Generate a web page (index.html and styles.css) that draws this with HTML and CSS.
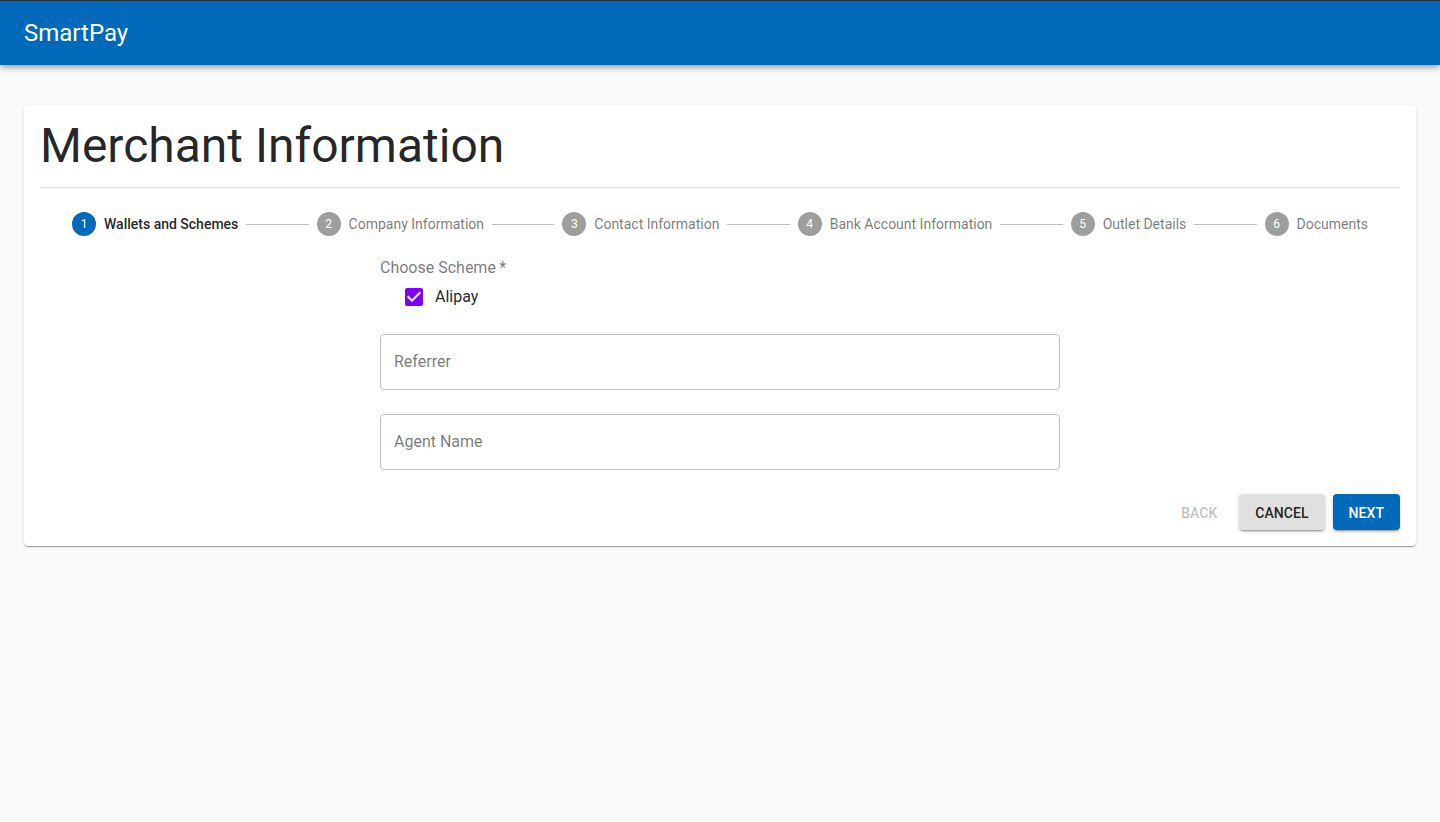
FILE: index.html
```html
<!DOCTYPE html>
<html lang="en">
<head>
<meta charset="utf-8">
<title>SmartPay</title>
<link rel="stylesheet" href="styles.css">
</head>
<body>
<header class="appbar">
  <div class="brand">SmartPay</div>
</header>
<main class="main">
  <section class="card">
    <h1 class="title">Merchant Information</h1>
    <hr class="divider">
    <div class="stepper">
      <div class="step active"><span class="dot">1</span><span class="label">Wallets and Schemes</span></div>
      <div class="connector"></div>
      <div class="step"><span class="dot">2</span><span class="label">Company Information</span></div>
      <div class="connector"></div>
      <div class="step"><span class="dot">3</span><span class="label">Contact Information</span></div>
      <div class="connector"></div>
      <div class="step"><span class="dot">4</span><span class="label">Bank Account Information</span></div>
      <div class="connector"></div>
      <div class="step"><span class="dot">5</span><span class="label">Outlet Details</span></div>
      <div class="connector"></div>
      <div class="step"><span class="dot">6</span><span class="label">Documents</span></div>
    </div>
    <div class="form">
      <div class="legend">Choose Scheme&thinsp;*</div>
      <label class="check-row">
        <span class="checkbox">
          <svg viewBox="0 0 24 24" width="24" height="24"><path fill="currentColor" d="M19 3H5c-1.11 0-2 .9-2 2v14c0 1.1.89 2 2 2h14c1.11 0 2-.9 2-2V5c0-1.1-.89-2-2-2zm-9 14l-5-5 1.41-1.41L10 14.17l7.59-7.59L19 8l-9 9z"/></svg>
        </span>
        <span class="check-label">Alipay</span>
      </label>
      <div class="field"><span class="placeholder">Referrer</span></div>
      <div class="field"><span class="placeholder">Agent Name</span></div>
    </div>
    <div class="actions">
      <button class="btn btn-text" disabled>Back</button>
      <button class="btn btn-default">Cancel</button>
      <button class="btn btn-primary">Next</button>
    </div>
  </section>
</main>
</body>
</html>
```

FILE: styles.css
```css
* { box-sizing: border-box; }
html, body { margin: 0; padding: 0; }
body {
  background: #fafafa;
  font-family: Roboto, "Liberation Sans", Arial, sans-serif;
  color: rgba(0,0,0,0.87);
  min-height: 822px;
}
.appbar {
  height: 65px;
  background: #0069ba;
  border-top: 1px solid #2a2f36;
  display: flex;
  align-items: center;
  padding: 0 24px;
  box-shadow: 0 2px 4px -1px rgba(0,0,0,0.2), 0 4px 5px 0 rgba(0,0,0,0.14), 0 1px 10px 0 rgba(0,0,0,0.12);
  position: relative;
  z-index: 2;
}
.brand {
  color: #fff;
  font-size: 24px;
  font-weight: 400;
  letter-spacing: 0;
  margin-top: -1px;
}
.main {
  padding: 40px 24px;
}
.card {
  background: #fff;
  border-radius: 4px;
  box-shadow: 0 2px 1px -1px rgba(0,0,0,0.2), 0 1px 1px 0 rgba(0,0,0,0.14), 0 1px 3px 0 rgba(0,0,0,0.12);
  padding: 16px 16px 16px;
}
.title {
  margin: -3px 0 0;
  font-size: 48px;
  font-weight: 400;
  line-height: 56px;
  color: rgba(0,0,0,0.87);
}
.divider {
  border: none;
  height: 1px;
  background: rgba(0,0,0,0.12);
  margin: 13px 0 0;
}
.stepper {
  display: flex;
  align-items: center;
  padding: 24px;
}
.step {
  display: flex;
  align-items: center;
  padding: 0 8px;
  flex: none;
}
.dot {
  width: 24px;
  height: 24px;
  border-radius: 50%;
  background: rgba(0,0,0,0.38);
  color: #fff;
  font-size: 12px;
  display: flex;
  align-items: center;
  justify-content: center;
  line-height: 1;
}
.step.active .dot { background: #0069ba; }
.label {
  margin-left: 8px;
  font-size: 14px;
  color: rgba(0,0,0,0.54);
  line-height: 20px;
}
.step.active .label {
  color: rgba(0,0,0,0.87);
  font-weight: 500;
}
.connector {
  flex: 1 1 auto;
  height: 1px;
  background: #bdbdbd;
}
.form {
  width: 680px;
  margin: 0 auto;
  display: flex;
  flex-direction: column;
}
.legend {
  font-size: 16px;
  line-height: 16px;
  color: rgba(0,0,0,0.54);
  margin-top: 0;
}
.check-row {
  display: flex;
  align-items: center;
  margin-left: 13px;
  height: 42px;
  margin-top: 0;
}
.checkbox {
  width: 42px;
  height: 42px;
  padding: 9px;
  color: #7f00ff;
  display: flex;
}
.check-label {
  font-size: 16px;
  color: rgba(0,0,0,0.87);
  line-height: 24px;
}
.field {
  height: 56px;
  border: 1px solid rgba(0,0,0,0.23);
  border-radius: 4px;
  display: flex;
  align-items: center;
  padding: 0 13px 2px;
  margin-top: 16px;
}
.field + .field { margin-top: 24px; }
.placeholder {
  font-size: 16px;
  color: rgba(0,0,0,0.54);
}
.actions {
  display: flex;
  justify-content: flex-end;
  gap: 8px;
  margin-top: 24px;
}
.btn {
  font-family: inherit;
  font-size: 14px;
  font-weight: 500;
  letter-spacing: 0.05px;
  text-transform: uppercase;
  height: 36px;
  min-width: 64px;
  padding: 1px 16px 0;
  border: none;
  border-radius: 4px;
  cursor: pointer;
}
.btn-text {
  background: transparent;
  color: rgba(0,0,0,0.26);
  padding: 1px 8px 0;
}
.btn-default {
  background: #e0e0e0;
  color: rgba(0,0,0,0.87);
  box-shadow: 0 3px 1px -2px rgba(0,0,0,0.2), 0 2px 2px 0 rgba(0,0,0,0.14), 0 1px 5px 0 rgba(0,0,0,0.12);
}
.btn-primary {
  background: #0069ba;
  color: #fff;
  box-shadow: 0 3px 1px -2px rgba(0,0,0,0.2), 0 2px 2px 0 rgba(0,0,0,0.14), 0 1px 5px 0 rgba(0,0,0,0.12);
}
```
